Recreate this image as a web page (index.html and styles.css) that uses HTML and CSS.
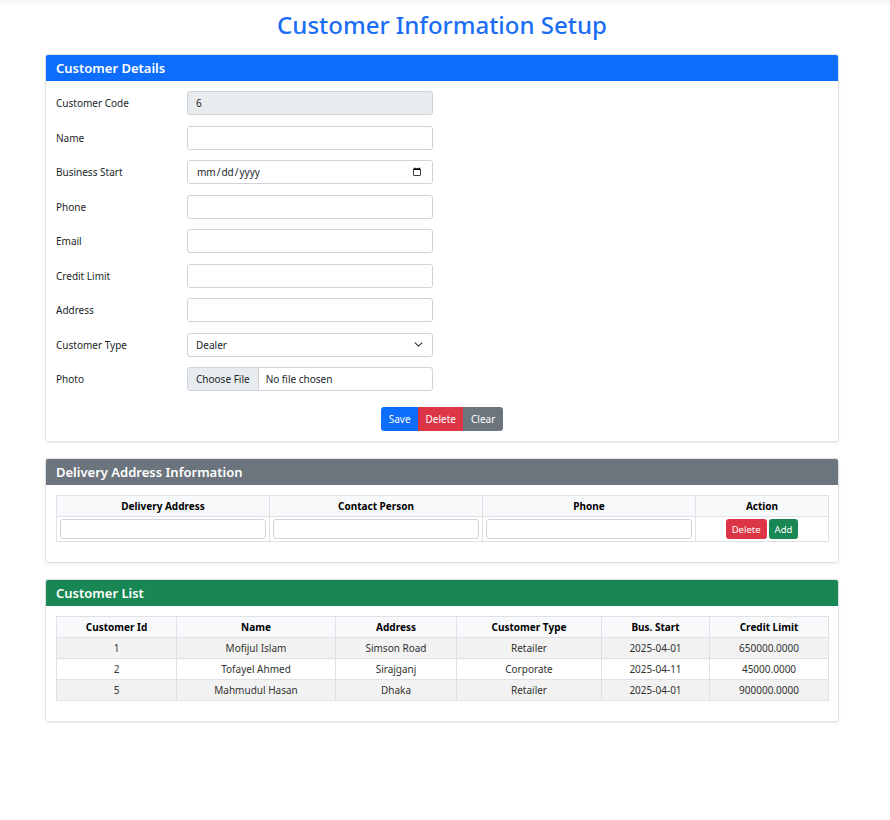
FILE: index.html
```html
<!DOCTYPE html>
<html>
<head>
<meta charset="utf-8">
<link rel="stylesheet" href="styles.css">
</head>
<body>
<div class="topbar"></div>
<main class="page">
  <h1 class="title">Customer Information Setup</h1>

  <section class="card">
    <div class="card-header bg-primary">Customer Details</div>
    <div class="card-body">
      <div class="form-row"><label class="lbl">Customer Code</label><input class="ctl ro" value="6" readonly></div>
      <div class="form-row"><label class="lbl">Name</label><input class="ctl"></div>
      <div class="form-row"><label class="lbl">Business Start</label><input class="ctl" type="date"></div>
      <div class="form-row"><label class="lbl">Phone</label><input class="ctl"></div>
      <div class="form-row"><label class="lbl">Email</label><input class="ctl"></div>
      <div class="form-row"><label class="lbl">Credit Limit</label><input class="ctl"></div>
      <div class="form-row"><label class="lbl">Address</label><input class="ctl"></div>
      <div class="form-row"><label class="lbl">Customer Type</label>
        <select class="ctl sel"><option>Dealer</option><option>Retailer</option><option>Corporate</option></select></div>
      <div class="form-row"><label class="lbl">Photo</label><input class="ctl file" type="file"></div>
      <div class="btn-row">
        <div class="btn-group">
          <button class="btn blue">Save</button><button class="btn red">Delete</button><button class="btn gray">Clear</button>
        </div>
      </div>
    </div>
  </section>

  <section class="card">
    <div class="card-header bg-secondary">Delivery Address Information</div>
    <div class="card-body">
      <table class="tbl deliv">
        <colgroup><col class="c1"><col class="c2"><col class="c3"><col class="c4"></colgroup>
        <thead><tr><th>Delivery Address</th><th>Contact Person</th><th>Phone</th><th>Action</th></tr></thead>
        <tbody><tr>
          <td class="inp"><input class="cell-input"></td>
          <td class="inp"><input class="cell-input"></td>
          <td class="inp"><input class="cell-input"></td>
          <td class="inp"><div class="acts"><button class="sbtn red">Delete</button><button class="sbtn green">Add</button></div></td>
        </tr></tbody>
      </table>
    </div>
  </section>

  <section class="card">
    <div class="card-header bg-success">Customer List</div>
    <div class="card-body">
      <table class="tbl list">
        <colgroup><col class="l1"><col class="l2"><col class="l3"><col class="l4"><col class="l5"><col class="l6"></colgroup>
        <thead><tr><th>Customer Id</th><th>Name</th><th>Address</th><th>Customer Type</th><th>Bus. Start</th><th>Credit Limit</th></tr></thead>
        <tbody>
          <tr class="odd"><td>1</td><td>Mofijul Islam</td><td>Simson Road</td><td>Retailer</td><td>2025-04-01</td><td>650000.0000</td></tr>
          <tr><td>2</td><td>Tofayel Ahmed</td><td>Sirajganj</td><td>Corporate</td><td>2025-04-11</td><td>45000.0000</td></tr>
          <tr class="odd"><td>5</td><td>Mahmudul Hasan</td><td>Dhaka</td><td>Retailer</td><td>2025-04-01</td><td>900000.0000</td></tr>
        </tbody>
      </table>
    </div>
  </section>
</main>
</body>
</html>
```
FILE: styles.css
```css
* { box-sizing: border-box; }
html, body { margin: 0; padding: 0; background: #fff; }
body { font-family: "Noto Sans", "Open Sans", sans-serif; color: #212529; font-size: 10px; }
.topbar { height: 6px; background: linear-gradient(#f2f2f2, #fff); }
.page { width: 794px; margin: 0 0 0 45px; padding-bottom: 40px; }
.title { margin: 4px 0 14px; text-align: center; font-size: 24px; font-weight: 500; color: #1a6ef5; line-height: 30px; }
.card { border: 1px solid #dfe2e5; border-radius: 3px; box-shadow: 0 1px 3px rgba(0,0,0,0.08); margin-bottom: 16px; overflow: hidden; }
.card-header { height: 26px; line-height: 26px; padding: 0 10px; color: #fff; font-size: 13px; font-weight: 600; }
.bg-primary { background: #0d6efd; }
.bg-secondary { background: #6c757d; }
.bg-success { background: #198754; }
.card-body { padding: 10px; }
.form-row { display: grid; grid-template-columns: 131px 246px; align-items: center; height: 24px; margin-bottom: 10.5px; }
.lbl { font-size: 10px; color: #212529; }
.ctl { width: 246px; height: 24px; border: 1px solid #ced4da; border-radius: 3px; padding: 0 8px; font: 10px "Noto Sans", sans-serif; color: #212529; background: #fff; outline: none; }
.ctl.ro { background: #e9ecef; }
.sel { appearance: none; -webkit-appearance: none; background-image: url("data:image/svg+xml,%3Csvg xmlns='http://www.w3.org/2000/svg' viewBox='0 0 16 16'%3E%3Cpath fill='none' stroke='%23343a40' stroke-linecap='round' stroke-linejoin='round' stroke-width='2' d='m2 5 6 6 6-6'/%3E%3C/svg%3E"); background-repeat: no-repeat; background-position: right 9px center; background-size: 9px 9px; }
.file { padding: 0; overflow: hidden; }
.file::file-selector-button { height: 22px; border: none; border-right: 1px solid #ced4da; background: #e9ecef; color: #212529; font: 10px "Noto Sans", sans-serif; padding: 0 8px; margin: 0 7px 0 0; }
.btn-row { display: flex; justify-content: center; padding-top: 5.5px; }
.btn-group { display: flex; border-radius: 3px; overflow: hidden; }
.btn { height: 24px; border: none; color: #fff; font: 10px "Noto Sans", sans-serif; padding: 0 7.5px; }
.blue { background: #0d6efd; }
.red { background: #dc3545; }
.gray { background: #6c757d; }
.green { background: #198754; }
.tbl { width: 100%; border-collapse: collapse; table-layout: fixed; margin-bottom: 10px; }
.tbl th, .tbl td { border: 1px solid #dee2e6; text-align: center; font-size: 10px; }
.tbl th { background: #f8f9fa; font-weight: 700; height: 21px; padding: 0 4px; color: #000; }
.tbl td { height: 21px; padding: 0 4px; color: #333; }
.tbl tr.odd td { background: #f2f2f2; }
.deliv td { height: 24px; }
.deliv td.inp { padding: 2px 3px; }
.cell-input { width: 100%; height: 20px; border: 1px solid #ced4da; border-radius: 3px; display: block; }
.acts { display: flex; justify-content: center; gap: 2px; }
.sbtn { height: 20px; border: none; border-radius: 3px; color: #fff; font: 9.5px "Noto Sans", sans-serif; padding: 0 6px; }
.c1, .c2, .c3 { width: 213px; }
.c4 { width: 133px; }
.l1 { width: 120px; } .l2 { width: 159px; } .l3 { width: 121px; } .l4 { width: 145px; } .l5 { width: 108px; } .l6 { width: 119px; }
```
